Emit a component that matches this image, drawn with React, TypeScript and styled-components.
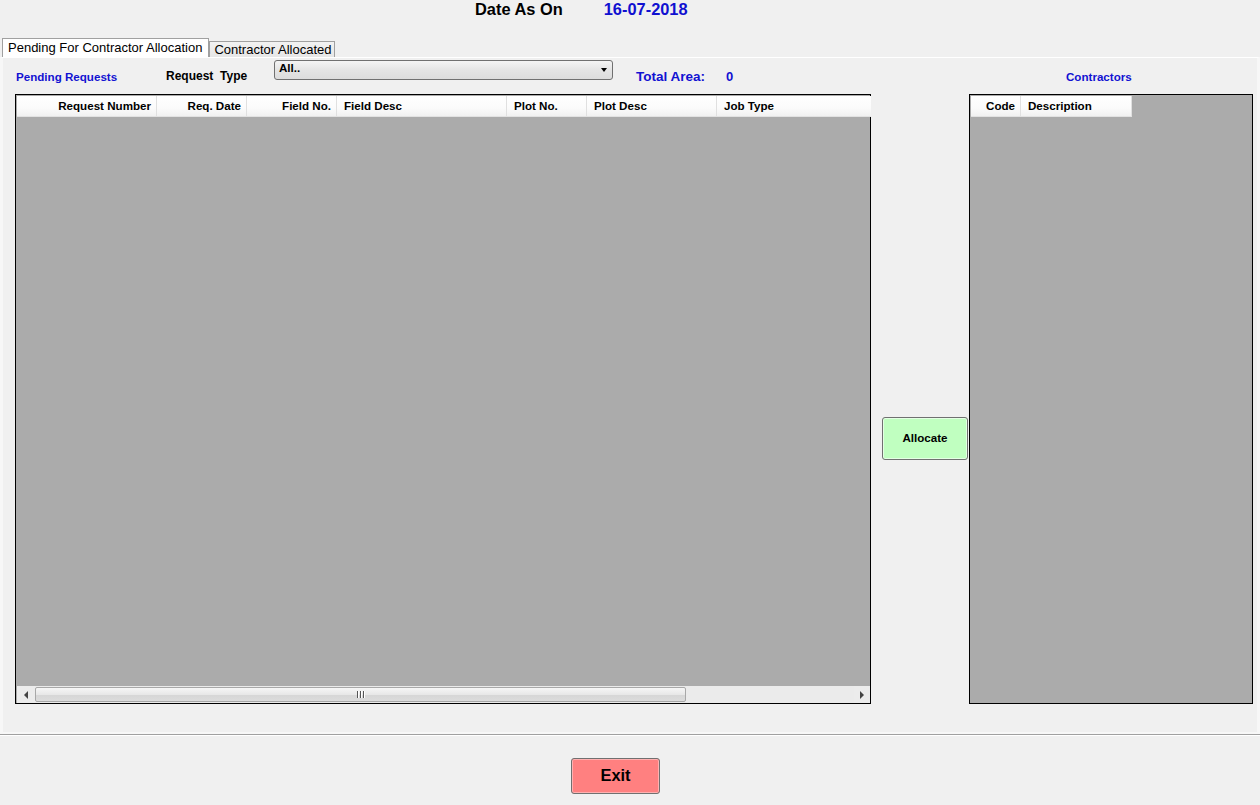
import React from "react";
import styled, { createGlobalStyle } from "styled-components";

const Global = createGlobalStyle`
  html, body { margin: 0; padding: 0; background: #f0f0f0; }
  body { font-family: "Liberation Sans", Arial, sans-serif; color: #000; }
  * { box-sizing: border-box; }
`;

const Page = styled.div`
  width: 1260px;
  height: 805px;
  display: flex;
  flex-direction: column;
  background: #f0f0f0;
  overflow: hidden;
`;

const TopBar = styled.div`
  height: 38px;
  display: flex;
  align-items: flex-start;
  padding: 0 0 0 475px;
  gap: 41px;
`;

const TopLabel = styled.span<{ $blue?: boolean }>`
  font-weight: bold;
  font-size: 16.4px;
  line-height: 18px;
  color: ${(p) => (p.$blue ? "#1010d0" : "#000")};
`;

const TabStrip = styled.div`
  height: 20px;
  display: flex;
  align-items: flex-end;
  padding-left: 2px;
  border-bottom: 1px solid #a0a0a0;
`;

const Tab = styled.div<{ $active?: boolean }>`
  height: ${(p) => (p.$active ? "20px" : "16px")};
  margin-bottom: ${(p) => (p.$active ? "-1px" : "0")};
  padding: ${(p) => (p.$active ? "0 6px 0 5px" : "0 3px 0 4px")};
  background: ${(p) => (p.$active ? "#ffffff" : "linear-gradient(#f2f2f2, #e6e6e6)")};
  border: 1px solid #a0a0a0;
  border-bottom: none;
  font-size: 13px;
  line-height: ${(p) => (p.$active ? "17px" : "15px")};
  white-space: nowrap;
`;

const TabPanel = styled.div`
  height: 677px;
  display: flex;
  flex-direction: column;
  border-left: 3px solid #f7f7f7;
  border-right: 3px solid #f7f7f7;
  border-bottom: 2px solid #f7f7f7;
  border-top: 1px solid #ffffff;
  margin-top: -1px;
`;

const Toolbar = styled.div`
  height: 36px;
  display: flex;
  align-items: center;
`;

const ToolLabel = styled.span<{ $w: number; $blue?: boolean; $size?: number }>`
  flex: 0 0 ${(p) => p.$w}px;
  font-weight: bold;
  font-size: ${(p) => p.$size ?? 11.6}px;
  color: ${(p) => (p.$blue ? "#1212d2" : "#000")};
  padding-top: 0px;
  white-space: nowrap;
`;

const Select = styled.div`
  flex: 0 0 339px;
  align-self: flex-start;
  margin: 2px 23px 0 0;
  height: 20px;
  border: 1px solid #707070;
  border-radius: 3px;
  background: linear-gradient(#f4f4f4, #e4e4e4 50%, #dcdcdc);
  display: flex;
  align-items: center;
  justify-content: space-between;
  padding: 0 4px 0 4px;
  font-weight: bold;
  font-size: 11.6px;
  line-height: 14px;
`;

const SelectText = styled.span`
  margin-top: -4px;
`;

const Caret = styled.span`
  width: 0;
  height: 0;
  border-left: 3px solid transparent;
  border-right: 3px solid transparent;
  border-top: 4px solid #000;
  margin-right: 1px;
`;

const MainRow = styled.div`
  height: 610px;
  display: flex;
  padding-left: 12px;
`;

const Grid = styled.div<{ $w: number }>`
  width: ${(p) => p.$w}px;
  height: 610px;
  border: 1px solid #000;
  padding: 1px 0 0 1px;
  background: #ababab;
  display: flex;
  flex-direction: column;
`;

const HeaderRow = styled.div`
  display: flex;
  height: 21px;
  flex: 0 0 21px;
`;

const HeaderCell = styled.div<{ $w: number; $right?: boolean; $last?: boolean }>`
  flex: 0 0 ${(p) => p.$w}px;
  height: 21px;
  background: linear-gradient(#ffffff, #fbfbfb 60%, #f1f1f1);
  border-bottom: 1px solid #e2e2e2;
  border-right: ${(p) => (p.$last ? "none" : "1px solid #e0e0e0")};
  font-weight: bold;
  font-size: 11.6px;
  line-height: 20px;
  text-align: ${(p) => (p.$right ? "right" : "left")};
  padding: ${(p) => (p.$right ? "0 5px 0 0" : "0 0 0 7px")};
  white-space: nowrap;
`;

const GridBody = styled.div`
  flex: 1;
  background: #ababab;
`;

const HScroll = styled.div`
  height: 17px;
  flex: 0 0 17px;
  display: flex;
  background: #ebebeb;
  align-items: stretch;
`;

const ArrowBtn = styled.div<{ $w: number }>`
  flex: 0 0 ${(p) => p.$w}px;
  display: flex;
  align-items: center;
  justify-content: center;
  background: #ececec;
`;

const ArrowLeft = styled.span`
  width: 0;
  height: 0;
  border-top: 4px solid transparent;
  border-bottom: 4px solid transparent;
  border-right: 4px solid #444;
`;

const ArrowRight = styled.span`
  width: 0;
  height: 0;
  border-top: 4px solid transparent;
  border-bottom: 4px solid transparent;
  border-left: 4px solid #444;
`;

const Thumb = styled.div<{ $w: number }>`
  flex: 0 0 ${(p) => p.$w}px;
  margin: 1px 0;
  border: 1px solid #a8a8a8;
  border-radius: 2px;
  background: linear-gradient(#f6f6f6, #e8e8e8 50%, #d6d6d6 51%, #dcdcdc);
  display: flex;
  align-items: center;
  justify-content: center;
  gap: 2px;
`;

const Grip = styled.span`
  width: 1px;
  height: 7px;
  background: #555;
  box-shadow: 1px 0 0 #fff;
`;

const Track = styled.div`
  flex: 1;
  background: #ebebeb;
`;

const MiddleCol = styled.div`
  flex: 0 0 98px;
  padding: 323px 0 0 11px;
`;

const GreenButton = styled.button`
  width: 86px;
  height: 43px;
  border: 1px solid #707070;
  border-radius: 3px;
  background: #c0ffc0;
  box-shadow: inset 0 0 0 1px #e4ffe4;
  font-family: "Liberation Sans", Arial, sans-serif;
  font-weight: bold;
  font-size: 11.6px;
  color: #000;
  padding: 0 0 2px 0;
`;

const Separator = styled.div`
  height: 2px;
  border-top: 1px solid #a0a0a0;
  border-bottom: 1px solid #ffffff;
`;

const Footer = styled.div`
  flex: 1;
  padding: 22px 0 0 571px;
`;

const ExitButton = styled.button`
  width: 89px;
  height: 36px;
  border: 1px solid #707070;
  border-radius: 3px;
  background: #ff8080;
  box-shadow: inset 0 0 0 1px #ffb0b0;
  font-family: "Liberation Sans", Arial, sans-serif;
  font-weight: bold;
  font-size: 16.4px;
  color: #000;
  padding: 0 0 1px 0;
`;

const leftCols = [
  { t: "Request Number", w: 140, r: true },
  { t: "Req. Date", w: 90, r: true },
  { t: "Field No.", w: 90, r: true },
  { t: "Field Desc", w: 170 },
  { t: "Plot No.", w: 80 },
  { t: "Plot Desc", w: 130 },
  { t: "Job Type", w: 154, last: true },
];

const rightCols = [
  { t: "Code", w: 50, r: true },
  { t: "Description", w: 111 },
];

export default function App() {
  return (
    <Page>
      <Global />
      <TopBar>
        <TopLabel>Date As On</TopLabel>
        <TopLabel $blue>16-07-2018</TopLabel>
      </TopBar>
      <TabStrip>
        <Tab $active>Pending For Contractor Allocation</Tab>
        <Tab>Contractor Allocated</Tab>
      </TabStrip>
      <TabPanel>
        <Toolbar>
          <ToolLabel $w={13} />
          <ToolLabel $w={150} $blue>
            Pending Requests
          </ToolLabel>
          <ToolLabel $w={108} $size={12}>
            Request&nbsp; Type
          </ToolLabel>
          <Select>
            <SelectText>All..</SelectText>
            <Caret />
          </Select>
          <ToolLabel $w={90} $blue $size={13.5}>
            Total Area:
          </ToolLabel>
          <ToolLabel $w={340} $blue $size={13}>
            0
          </ToolLabel>
          <ToolLabel $w={100} $blue>
            Contractors
          </ToolLabel>
        </Toolbar>
        <MainRow>
          <Grid $w={856}>
            <HeaderRow>
              {leftCols.map((c) => (
                <HeaderCell key={c.t} $w={c.w} $right={c.r} $last={c.last}>
                  {c.t}
                </HeaderCell>
              ))}
            </HeaderRow>
            <GridBody />
            <HScroll>
              <ArrowBtn $w={18}>
                <ArrowLeft />
              </ArrowBtn>
              <Thumb $w={651}>
                <Grip />
                <Grip />
                <Grip />
              </Thumb>
              <Track />
              <ArrowBtn $w={16}>
                <ArrowRight />
              </ArrowBtn>
            </HScroll>
          </Grid>
          <MiddleCol>
            <GreenButton>Allocate</GreenButton>
          </MiddleCol>
          <Grid $w={284}>
            <HeaderRow>
              {rightCols.map((c) => (
                <HeaderCell key={c.t} $w={c.w} $right={c.r}>
                  {c.t}
                </HeaderCell>
              ))}
            </HeaderRow>
            <GridBody />
          </Grid>
        </MainRow>
      </TabPanel>
      <Separator />
      <Footer>
        <ExitButton>Exit</ExitButton>
      </Footer>
    </Page>
  );
}
